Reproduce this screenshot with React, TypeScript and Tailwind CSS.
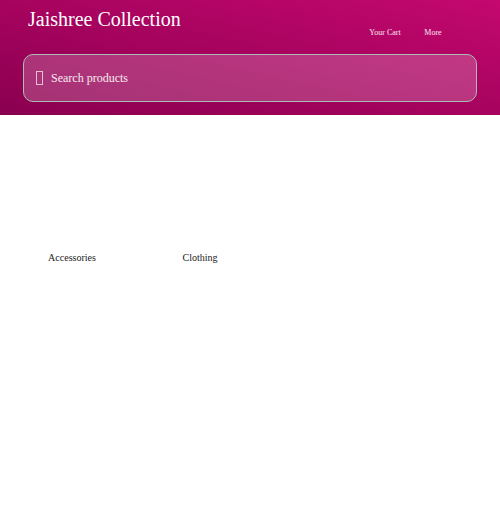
import React from "react";

const categories = ["Accessories", "Clothing"];

export default function App() {
  return (
    <div className="min-h-[518px] bg-white font-['Liberation_Serif','Times_New_Roman',serif]">
      <header className="bg-gradient-to-tr from-[#8a004f] to-[#c4086f] px-[23px] pt-2 pb-[13px]">
        <div className="flex h-[38px] items-start justify-between">
          <h1 className="pl-[5px] text-[20px] leading-[23px] font-normal text-white">Jaishree Collection</h1>
          <nav className="mt-[20px] mr-[20px] flex">
            <a className="w-12 text-center text-[8px] leading-[10px] text-white/90">Your Cart</a>
            <a className="w-12 text-center text-[8px] leading-[10px] text-white/90">More</a>
          </nav>
        </div>
        <div className="mt-2 flex h-[48px] items-center gap-2 rounded-[10px] border border-[#a9bdb4] bg-white/20 pl-3">
          <span className="block h-[14px] w-[7px] border border-white/70" />
          <span className="text-[12px] text-white/90">Search products</span>
        </div>
      </header>

      <main className="flex px-2 pt-4">
        {categories.map((c) => (
          <div key={c} className="flex w-[128px] flex-col items-center">
            <div className="h-[119px] w-full" />
            <span className="text-[10px] leading-[15px] text-[#222]">{c}</span>
          </div>
        ))}
      </main>
    </div>
  );
}
